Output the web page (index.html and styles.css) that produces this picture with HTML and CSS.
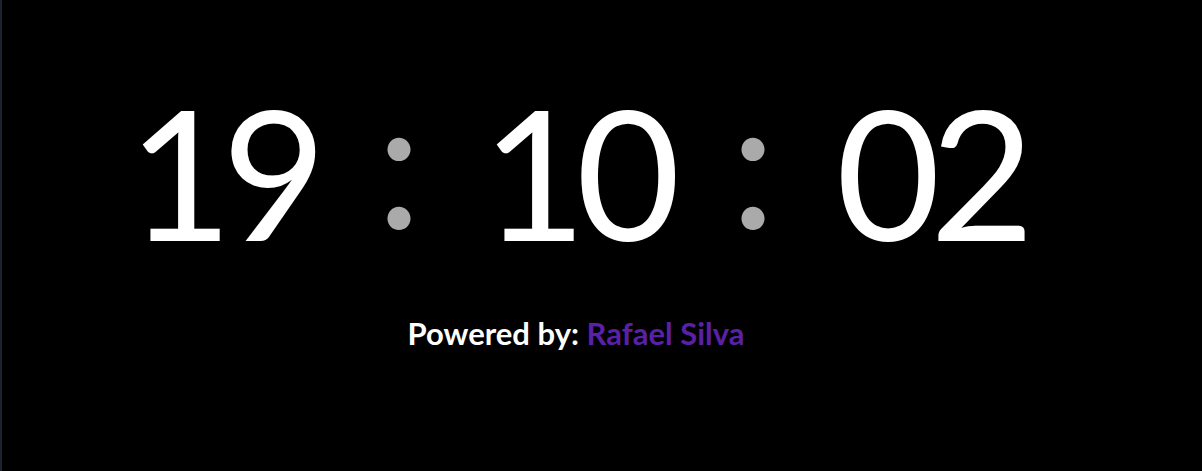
FILE: index.html
```html
<!DOCTYPE html>
<html lang="en">
<head>
<meta charset="utf-8">
<title>Clock</title>
<link rel="stylesheet" href="styles.css">
</head>
<body>
<main class="page">
  <div class="clock">
    <span class="group"><span class="d">1</span><span class="d">9</span></span><span class="sep">:</span><span class="group"><span class="d">1</span><span class="d">0</span></span><span class="sep">:</span><span class="group"><span class="d">0</span><span class="d">2</span></span>
  </div>
  <p class="credit">Powered by: <span class="author">Rafael Silva</span></p>
</main>
</body>
</html>
```
FILE: styles.css
```css
html, body {
  margin: 0;
  height: 100%;
  background: #000;
}
body {
  border-left: 2px solid #1c2430;
  box-sizing: border-box;
}
.page {
  display: flex;
  flex-direction: column;
  align-items: center;
  padding: 68px 52px 0 0;
}
.clock {
  font-family: Lato, "Open Sans", sans-serif;
  font-weight: 400;
  font-size: 180px;
  line-height: 180px;
  color: #fff;
  white-space: nowrap;
}
.group {
  display: inline-block;
}
.d {
  display: inline-block;
  width: 94px;
  text-align: center;
}
.sep {
  display: inline-block;
  width: 166px;
  text-align: center;
  color: #aaaaaa;
  font-size: 184px;
  vertical-align: 12px;
}
.credit {
  margin: 57px 0 0;
  font-family: Lato, "Open Sans", sans-serif;
  font-weight: 700;
  font-size: 31px;
  line-height: 1;
  color: #fff;
}
.author {
  color: #5a20a8;
}
```
